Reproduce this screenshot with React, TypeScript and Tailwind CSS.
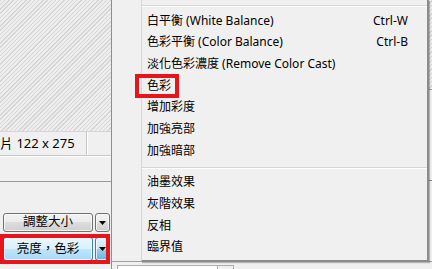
import React from 'react';

type Item = { label: string; keys?: string };

const topItems: Item[] = [
  { label: '白平衡 (White Balance)', keys: 'Ctrl-W' },
  { label: '色彩平衡 (Color Balance)', keys: 'Ctrl-B' },
  { label: '淡化色彩濃度 (Remove Color Cast)' },
  { label: '色彩' },
  { label: '增加彩度' },
  { label: '加強亮部' },
  { label: '加強暗部' },
];

const bottomItems: Item[] = [
  { label: '油墨效果' },
  { label: '灰階效果' },
  { label: '反相' },
  { label: '臨界值' },
];

function Separator() {
  return (
    <div className="h-[10px] pt-[5px]">
      <div className="h-[2px] border-t border-b border-t-[#d7d7d7] border-b-white" />
    </div>
  );
}

function MenuRow({ item }: { item: Item }) {
  return (
    <div className="flex h-[21.67px] items-center pl-[5px] pr-[19px] text-[12px] text-black">
      <span className="flex-1 whitespace-nowrap">{item.label}</span>
      {item.keys && <span className="whitespace-nowrap">{item.keys}</span>}
    </div>
  );
}

function Caret() {
  return (
    <svg width="7" height="4" viewBox="0 0 7 4">
      <path d="M0 0h7L3.5 4z" fill="#000" />
    </svg>
  );
}

function SplitButton({ label, hot }: { label: string; hot?: boolean }) {
  const body = hot
    ? 'border-[#3c7fb1] bg-[linear-gradient(#eaf6fd_0%,#d9f0fc_50%,#bee6fd_50%,#a7d9f5_100%)]'
    : 'border-[#707070] bg-[linear-gradient(#f2f2f2_0%,#ebebeb_50%,#dddddd_50%,#cfcfcf_100%)]';
  const drop = hot
    ? 'border-[#3c7fb1] bg-[linear-gradient(#e5f4fc_0%,#c4e5f6_50%,#98d1ef_50%,#68b3db_100%)]'
    : 'border-[#707070] bg-[linear-gradient(#f2f2f2_0%,#ebebeb_50%,#dddddd_50%,#cfcfcf_100%)]';
  return (
    <div className={`flex pl-[3px] ${hot ? 'h-[24px]' : 'h-[19px]'}`}>
      <div
        className={`flex w-[90px] items-center justify-center rounded-[3px] border text-[12.5px] text-black shadow-[inset_0_0_0_1px_rgba(255,255,255,0.7)] ${body}`}
      >
        {label}
      </div>
      <div
        className={`ml-[2px] flex w-[15px] items-center justify-center rounded-[3px] border shadow-[inset_0_0_0_1px_rgba(255,255,255,0.7)] ${drop}`}
      >
        <Caret />
      </div>
    </div>
  );
}

export default function App() {
  return (
    <div className="relative flex h-[269px] w-[432px] overflow-hidden bg-[#f0f0f0] font-['Segoe_UI','Noto_Sans','Noto_Sans_CJK_TC',sans-serif]">
      {/* left panel */}
      <div className="flex w-[112px] flex-col border-r border-r-[#8e8e8e]">
        <div className="h-[131px] bg-[repeating-linear-gradient(-45deg,#ededed_0px,#ededed_2px,#d6d6d6_2px,#d6d6d6_3px)]" />
        <div className="flex h-[25px] border-t border-b border-t-[#d5d5d5] border-b-[#c8c8c8]">
          <div className="flex w-[87px] items-center border-r border-r-[#c8c8c8]">
            <span className="whitespace-nowrap text-[13px] text-black">片 122 x 275</span>
          </div>
          <div className="flex-1 border-l border-l-white" />
        </div>
        <div className="h-[26px] border-t border-t-white border-b border-b-[#9a9a9a]" />
        <div className="flex flex-col gap-[5px] pt-[31px]">
          <SplitButton label="調整大小" />
          <SplitButton label="亮度，色彩" hot />
        </div>
      </div>

      {/* right area */}
      <div className="flex flex-1 flex-col">
        <div className="flex flex-1">
          <div className="flex-1" />
          <div className="flex w-[4px] flex-col">
            <div className="h-[90px] border-b border-b-[#a0a0a0] bg-[repeating-linear-gradient(-45deg,#ededed_0px,#ededed_2px,#d6d6d6_2px,#d6d6d6_3px)]" />
            <div className="h-[91px] border-b border-b-[#8a8a8a]" />
          </div>
        </div>
        <div className="h-[8px] border-t border-t-[#a0a0a0] pl-[5px] pt-[3px]">
          <div className="flex h-[20px] w-[117px] border border-[#abadb3] bg-white">
            <div className="flex-1" />
            <div className="w-[16px] border-l border-l-[#abadb3] bg-[#f0f0f0]" />
          </div>
        </div>
      </div>

      {/* popup menu */}
      <div className="absolute left-[141px] top-0 flex h-[262px] w-[288px] flex-col border-l border-l-[#d8d8d8] border-r-2 border-b-2 border-r-[#8c8c8c] border-b-[#8c8c8c] bg-[#f0f0f0] shadow-[1px_1px_1px_rgba(0,0,0,0.25)]">
        <Separator />
        {topItems.map((it) => (
          <MenuRow key={it.label} item={it} />
        ))}
        <Separator />
        {bottomItems.map((it) => (
          <MenuRow key={it.label} item={it} />
        ))}
      </div>

      {/* red highlight boxes */}
      <div className="absolute left-[135px] top-[74px] h-[24px] w-[44px] border-4 border-[#e8141c]" />
      <div className="absolute left-0 top-[234px] h-[30px] w-[110px] border-4 border-[#e8141c]" />
    </div>
  );
}
